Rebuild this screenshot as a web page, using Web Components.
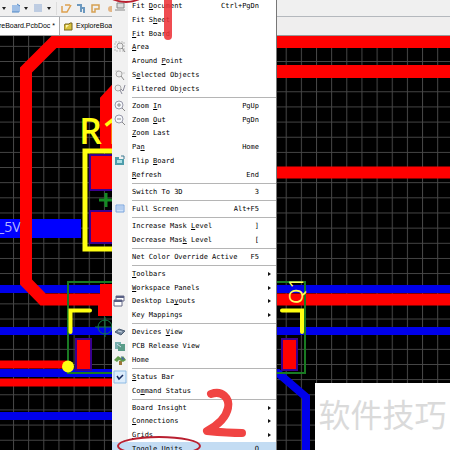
<!DOCTYPE html>
<html lang="en">
<head>
<meta charset="utf-8">
<meta name="viewport" content="width=device-width, initial-scale=1">
<title>PCB Editor – View menu</title>
<style>
html,body{margin:0;height:100%;overflow:hidden;background:#000}
</style>
</head>
<body>
<pcb-workspace></pcb-workspace>
<script>
function define(name, html, setup){
  customElements.define(name, class extends HTMLElement{
    constructor(){
      super();
      const t=document.createElement('template');
      t.innerHTML=html;
      this.attachShadow({mode:'open'}).append(t.content.cloneNode(true));
    }
    connectedCallback(){ if(setup) setup(this,this.shadowRoot); }
  });
}

define('tool-bar',`<style>
:host{display:flex;align-items:center;height:17px;background:#f0f0f0;border-bottom:1px solid #b4b8bd;box-sizing:border-box;overflow:hidden}
svg{display:block;width:112px;height:17px;flex:none}
</style>
<svg viewBox="0 0 112 17" fill="none">
 <path d="M2 7h4l-2 3zM24 7h4l-2 3zM47 7h4l-2 3z" fill="#222"/>
 <path d="M12 5h8v7h-8z" fill="#9fbfe6"/><path d="M12 12h7M17 4l3 2" stroke="#4e86c4"/>
 <path d="M34 5h8M34 7h8M34 9h8M34 11h8" stroke="#8ba9d4"/><path d="M56.500 2v13" stroke="#ddd"/>
 <path d="M62 6v6h5l4-7M65 5h5" stroke="#dda04e" stroke-width="1.500"/>
 <path d="M77 5h4v7M80 8h4v5" stroke="#6b98bf" stroke-width="2"/>
 <path d="M92 12V5h7v4h-4v3z" stroke="#d5a052" stroke-width="1.500"/>
 <circle cx="111" cy="9" r="3" fill="#e3b584"/>
</svg>`);

define('doc-tabs',`<style>
:host{display:flex;height:19px;box-sizing:border-box;background:#efeeee;border-bottom:1px solid #999;overflow:hidden;font:7px/18px "Liberation Sans",Arial,sans-serif;color:#000}
button{all:unset;white-space:nowrap;box-sizing:border-box;background:#f8f7f7}
.a{width:60px;padding-right:4px;border-right:1px solid #aaa;display:flex;justify-content:flex-end;background:#fff}
.b{display:flex;align-items:center;gap:3px;padding-left:4px;width:120px}
svg{width:9px;height:9px}
</style>
<button class="a">oreBoard.PcbDoc *</button>
<button class="b"><svg viewBox="0 0 9 9"><path d="M1 2h4l1-1h2v7H0V4z" fill="#d8c13c" stroke="#77651e"/><path d="M2 3h3l-3 3z" fill="#fff4b0"/></svg>ExploreBoard</button>`);

define('pcb-board',`<style>
:host{display:block;min-height:0}
svg{display:block;width:100%;height:100%}
text{font-family:"Open Sans",sans-serif}
</style>
<svg viewBox="0 36 450 414" preserveAspectRatio="xMinYMin slice" fill="none">
 <defs><pattern id="g" x="13" y="61" width="15.150" height="15.150" patternUnits="userSpaceOnUse"><path d="M.5 0V16M0 .5H16" stroke="#474747"/></pattern></defs>
 <path d="M0 36H900V900H0z" fill="#000"/><path d="M0 36H900V900H0z" fill="url(#g)"/>
 <path d="M0 228.500H81" stroke="#00f" stroke-width="19"/>
 <g stroke="#0000ea" stroke-width="8"><path d="M0 289H900M0 331H900M0 373H116M0 416H112M270 373H278L306 397V900"/></g>
 <g stroke="#f00" stroke-width="12">
  <path d="M900 42H54L26 70V282L43 299.500H900"/>
  <path d="M270 71.500H900" stroke-width="13"/><path d="M270 172.500H900"/>
  <path d="M118 87L106 100V150"/>
  <path d="M0 364.500H67M0 382.500H116" stroke-width="8"/>
 </g>
 <text x="-2" y="232" font-size="14" fill="#b6b6ff">_5V</text>
 <path d="M100 284H114V316H98V305H100z" fill="#f00"/>
 <g fill="#f00" stroke="#3a0090" stroke-width="2"><path d="M90 155H116V190H90zM90 211H116V243H90zM76 339H91V370H76zM282 339H297V370H282z"/></g>
 <path d="M120 151H85V249H120" stroke="#ff1" stroke-width="5"/>
 <text x="79" y="144" font-size="36" fill="#ff1" font-weight="600">R1</text>
 <path d="M99 200H113M106 193V207" stroke="#138a22" stroke-width="3"/>
 <path d="M68 282H305V373H68z" stroke="#197a22" stroke-width="2"/>
 <circle cx="105" cy="327" r="7" stroke="#137c45"/><path d="M95 327H115M105 317V337" stroke="#137c45"/>
 <path d="M90 310.500H70.500V332M282 310.500H302V332" stroke="#ff1" stroke-width="4" stroke-linecap="round"/>
 <circle cx="68" cy="366.500" r="6" fill="#ff1"/>
 <text transform="translate(303 304) rotate(-90)" font-size="20" font-weight="500" fill="#ffff60">Q1</text>
</svg>`);

const icons={
 fit:'<path d="M3 3h7v5H3zM1 10h10" stroke="#888" fill="#ddd"/>',
 area:'<path d="M1 1h9v9H1z" stroke="#bbb" stroke-dasharray="2 1"/><circle cx="6" cy="5" r="3" stroke="#999" fill="#eee"/><path d="M8 7l3 4" stroke="#888"/>',
 sel:'<path d="M1 2h4M7 4h4" stroke="#ccc"/><circle cx="5" cy="5" r="3" stroke="#aaa" fill="#eee"/><path d="M7 7l3 4" stroke="#888"/>',
 filt:'<circle cx="4" cy="5" r="3" stroke="#aaa" fill="#eee"/><path d="M6 7l2 4M7 6l2 2 2-6" stroke="#8a8a9a"/>',
 zin:'<circle cx="5" cy="5" r="4" stroke="#99a" fill="#f4f7fa"/><path d="M3 5h4M5 3v4M8 8l3 3" stroke="#888"/>',
 zout:'<circle cx="5" cy="5" r="4" stroke="#99a" fill="#f4f7fa"/><path d="M3 5h4M8 8l3 3" stroke="#888"/>',
 flip:'<path d="M1 2h4v2h5v6H1z" fill="#4e9dab"/><path d="M3 5h5v3H3z" fill="#aee0e6"/><path d="M7 1h3v3" stroke="#3c7b92"/>',
 full:'<path d="M2 2h8v7H2z" fill="#cfe2fa" stroke="#7aa4dc"/><path d="M3 4h6M3 6h6" stroke="#9ab9e4"/>',
 desk:'<path d="M2 1h8v5H2z" fill="#fff" stroke="#666a88"/><path d="M2 2h8" stroke="#596085" stroke-width="2"/><path d="M0 5h8v6H0z" fill="#fff" stroke="#666a88"/><path d="M0 6h8" stroke="#596085" stroke-width="2"/>',
 dev:'<path d="M1 6l4-3 6 2-4 4z" fill="#74879c" stroke="#4c5d73"/><path d="M4 5l4 1" stroke="#cad8e5"/>',
 pcb:'<path d="M1 2h6v7H1z" fill="#77adad"/><path d="M4 4h7v7H4z" fill="#5a9c88"/><path d="M3 4l4 3" stroke="#cde"/>',
 home:'<path d="M5 7h3v4H5z" fill="#9d7537"/><path d="M0 6l4-4 3 2 2-2 3 4-3 2-4-2-2 2z" fill="#5e9a4a"/><path d="M7 2l4 3-3 1z" fill="#47699d"/>',
 check:'<path d="M0 0h12v12H0z" fill="#dcecfb" stroke="#8dbbe5"/><path d="M3 5l2 3 4-4" stroke="#16295e" stroke-width="1.500"/>'
};

define('menu-item',`<style>
:host{display:block;flex:138 1 0px;min-height:0}
button{all:unset;box-sizing:border-box;display:grid;grid-template-columns:20px 1fr auto 17px;align-items:center;width:100%;height:100%;white-space:pre;font:7px/12px "DejaVu Sans Mono","Liberation Mono",monospace;color:#000}
svg{width:12px;height:12px;margin-left:2px;overflow:visible}
kbd{font:inherit}
i{justify-self:end;margin-right:5px;border-left:3px solid #111;border-top:2px solid transparent;border-bottom:2px solid transparent}
::slotted(u){text-underline-offset:1px}
:host([current]) button{background:#c3dcf3}
</style>
<button role="menuitem"><svg viewBox="0 0 12 12" fill="none" aria-hidden="true"></svg><span><slot></slot></span><kbd></kbd></button>`,(h,r)=>{
  r.querySelector('svg').innerHTML=icons[h.getAttribute('icon')]||'';
  r.querySelector('kbd').textContent=h.getAttribute('key')||'';
  if(h.hasAttribute('sub')) r.querySelector('button').append(document.createElement('i'));
});

define('menu-rule',`<style>
:host{display:flex;flex:32 1 0px;align-items:center;padding-left:20px}
hr{flex:1;margin:0;border:0;border-top:1px solid #b5b5b5}
</style><hr>`);

define('view-menu',`<style>
:host{display:flex;flex-direction:column;box-sizing:border-box;background:linear-gradient(90deg,#f1f1f1 16px,#fff 16px);border-right:1px solid #777}
</style><slot></slot>`);

define('pen-marks',`<style>
:host{display:block;pointer-events:none}
svg{display:block;width:100%;height:100%}
</style>
<svg viewBox="0 0 450 450" preserveAspectRatio="xMinYMin slice" fill="none" stroke-linecap="round" stroke-linejoin="round">
 <path d="M168 -6V36" stroke="#ed3339" stroke-opacity=".88" stroke-width="8"/>
 <path d="M211 394C222 390 230 398 228 408C226 418 218 425 207 431C218 432 230 433 242 433" stroke="#f04443" stroke-width="8"/>
 <ellipse cx="159" cy="446" rx="41" ry="9" stroke="#b91f30" stroke-width="2"/>
 <ellipse cx="126" cy="-6" rx="17" ry="8" stroke="#b91f30" stroke-width="2"/>
</svg>`);

define('water-mark',`<style>
:host{display:flex;justify-content:center;box-sizing:border-box;padding-top:14px;background:#fff;color:#dadada;font:400 32px/32px "Noto Sans CJK SC",sans-serif;white-space:nowrap}
</style><span>软件技巧</span>`);

define('pcb-workspace',`<style>
:host{position:relative;display:flex;flex-direction:column;height:100vh;overflow:hidden}
pcb-board{flex:1}
view-menu{position:absolute;left:112px;top:-1px;width:165px;height:457px}
pen-marks{position:absolute;inset:0}
water-mark{position:absolute;right:0;bottom:0;width:135px;height:67px}
</style>
<tool-bar></tool-bar><doc-tabs></doc-tabs><pcb-board></pcb-board>
<view-menu role="menu">
<menu-item icon="fit" key="Ctrl+PgDn">Fit <u>D</u>ocument</menu-item>
<menu-item>Fit S<u>h</u>eet</menu-item>
<menu-item><u>F</u>it Board</menu-item>
<menu-item icon="area"><u>A</u>rea</menu-item>
<menu-item>Around <u>P</u>oint</menu-item>
<menu-item icon="sel">S<u>e</u>lected Objects</menu-item>
<menu-item icon="filt">Filtered Ob<u>j</u>ects</menu-item>
<menu-rule></menu-rule>
<menu-item icon="zin" key="PgUp">Zoom <u>I</u>n</menu-item>
<menu-item icon="zout" key="PgDn">Zoom <u>O</u>ut</menu-item>
<menu-item><u>Z</u>oom Last</menu-item>
<menu-item key="Home">Pa<u>n</u></menu-item>
<menu-item icon="flip">Flip <u>B</u>oard</menu-item>
<menu-item key="End"><u>R</u>efresh</menu-item>
<menu-rule></menu-rule>
<menu-item key="3">Switch To 3D</menu-item>
<menu-rule></menu-rule>
<menu-item icon="full" key="Alt+F5">Full Screen</menu-item>
<menu-rule></menu-rule>
<menu-item key="]">Increase Mask <u>L</u>evel</menu-item>
<menu-item key="[">Decrease Mas<u>k</u> Level</menu-item>
<menu-rule></menu-rule>
<menu-item key="F5">Net Color Override Active</menu-item>
<menu-rule></menu-rule>
<menu-item sub><u>T</u>oolbars</menu-item>
<menu-item sub><u>W</u>orkspace Panels</menu-item>
<menu-item icon="desk" sub>Desktop La<u>y</u>outs</menu-item>
<menu-item sub>Key Mappings</menu-item>
<menu-rule></menu-rule>
<menu-item icon="dev">Devices <u>V</u>iew</menu-item>
<menu-item icon="pcb">PCB Release View</menu-item>
<menu-item icon="home">Home</menu-item>
<menu-rule></menu-rule>
<menu-item icon="check"><u>S</u>tatus Bar</menu-item>
<menu-item>Co<u>m</u>mand Status</menu-item>
<menu-rule></menu-rule>
<menu-item sub>Board Insight</menu-item>
<menu-item sub><u>C</u>onnections</menu-item>
<menu-item sub><u>G</u>rids</menu-item>
<menu-item key="Q" current>To<u>g</u>gle Units</menu-item>
</view-menu>
<water-mark></water-mark>
<pen-marks></pen-marks>`);
</script>
</body>
</html>
